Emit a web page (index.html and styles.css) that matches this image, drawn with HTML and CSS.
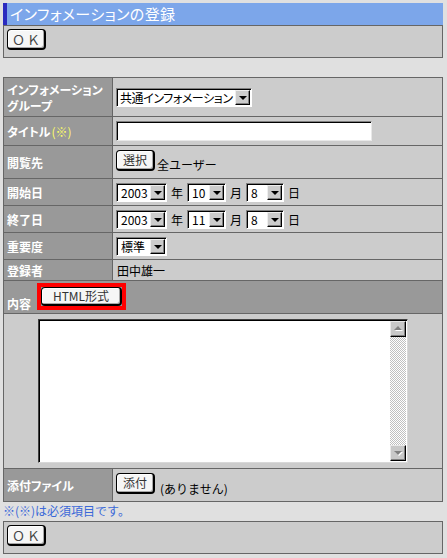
FILE: index.html
```html
<!DOCTYPE html>
<html lang="ja">
<head>
<meta charset="utf-8">
<title>インフォメーションの登録</title>
<link rel="stylesheet" href="styles.css">
</head>
<body>
<div class="page">
  <h1 class="title">インフォメーションの登録</h1>
  <div class="toolbar"><span class="btn btn-ok">ＯＫ</span></div>

  <div class="form">
    <div class="lab lab-2">インフォメーション<br>グループ</div>
    <div class="val">
      <span class="sel w-group"><span class="sel-text tight">共通インフォメーション</span><span class="sel-btn"></span></span>
    </div>

    <div class="lab">タイトル<span class="req">(※)</span></div>
    <div class="val"><span class="input"></span></div>

    <div class="lab">閲覧先</div>
    <div class="val">
      <span class="pair"><span class="btn btn-sm">選択</span><span class="after">全ユーザー</span></span>
    </div>

    <div class="lab">開始日</div>
    <div class="val date">
      <span class="sel w-year"><span class="sel-text">2003</span><span class="sel-btn"></span></span><span>年</span>
      <span class="sel w-month"><span class="sel-text">10</span><span class="sel-btn"></span></span><span>月</span>
      <span class="sel w-day"><span class="sel-text">8</span><span class="sel-btn"></span></span><span>日</span>
    </div>

    <div class="lab">終了日</div>
    <div class="val date">
      <span class="sel w-year"><span class="sel-text">2003</span><span class="sel-btn"></span></span><span>年</span>
      <span class="sel w-month"><span class="sel-text">11</span><span class="sel-btn"></span></span><span>月</span>
      <span class="sel w-day"><span class="sel-text">8</span><span class="sel-btn"></span></span><span>日</span>
    </div>

    <div class="lab">重要度</div>
    <div class="val">
      <span class="sel w-year"><span class="sel-text">標準</span><span class="sel-btn"></span></span>
    </div>

    <div class="lab">登録者</div>
    <div class="val"><span class="plain">田中雄一</span></div>

    <div class="content-head">
      <span class="ch-label">内容</span>
      <span class="hilite"><span class="btn btn-html">HTML形式</span></span>
    </div>

    <div class="content-body">
      <div class="textarea">
        <div class="ta-text"></div>
        <div class="scrollbar">
          <span class="sb-btn sb-up"></span>
          <span class="sb-track"></span>
          <span class="sb-btn sb-down"></span>
        </div>
      </div>
    </div>

    <div class="lab">添付ファイル</div>
    <div class="val">
      <span class="pair"><span class="btn btn-sm">添付</span><span class="after after-file">(ありません)</span></span>
    </div>
  </div>

  <p class="note">※(※)は必須項目です。</p>
  <div class="toolbar"><span class="btn btn-ok">ＯＫ</span></div>
</div>
</body>
</html>
```

FILE: styles.css
```css
html, body {
  margin: 0;
  padding: 0;
  background: #e0e0e0;
}

body {
  font-family: "Noto Sans CJK JP", "Liberation Sans", sans-serif;
  font-size: 12px;
  color: #000;
}

.page {
  width: 440px;
  padding: 3px 0 0 3px;
}

.title {
  margin: 0;
  height: 22px;
  box-sizing: border-box;
  background: #7ca6ea;
  border-left: 4px solid #2a2abf;
  padding-left: 3px;
  color: #fff;
  font-size: 15px;
  font-weight: normal;
  line-height: 22px;
  font-feature-settings: "palt";
  letter-spacing: 0.4px;
}

.toolbar {
  height: 33px;
  box-sizing: border-box;
  background: #cccccc;
  border: 1px solid #666;
  padding: 3px 0 0 3px;
}

/* buttons */
.btn {
  display: inline-flex;
  align-items: center;
  justify-content: center;
  box-sizing: border-box;
  background: #f6f6f6;
  border: 1px solid #000;
  border-right-width: 2px;
  border-bottom-width: 2px;
  border-radius: 4px;
  box-shadow: inset -1px -1px #a8a8a8, inset 1px 1px #fff;
  color: #333;
  font-size: 12px;
  line-height: 1;
}

.btn-ok {
  width: 39px;
  height: 21px;
  letter-spacing: 2px;
  padding-left: 2px;
  font-size: 13px;
  color: #444;
}

.btn-sm {
  width: 39px;
  height: 21px;
}

.btn-html {
  width: 81px;
  height: 19px;
}

/* form grid */
.form {
  margin-top: 19px;
  display: grid;
  grid-template-columns: 108px 1fr;
  grid-template-rows: 38px 28px 32px 26px 26px 26px 20px 32px 154px 32px;
  gap: 1px;
  background: #666;
  border: 1px solid #666;
}

.lab {
  background: #999999;
  color: #fff;
  font-weight: bold;
  padding-left: 3px;
  display: flex;
  align-items: center;
  line-height: 15px;
  white-space: nowrap;
  font-feature-settings: "palt";
}

.lab-2 {
  padding-top: 1px;
  line-height: 16px;
}

.req {
  color: #ffff66;
  font-weight: normal;
  margin-left: 1px;
}

.val {
  background: #cccccc;
  padding-left: 3px;
  display: flex;
  align-items: center;
}

.plain {
  padding-left: 1px;
  padding-top: 1px;
}

.date {
  gap: 4px;
}

/* fake select */
.sel {
  display: inline-flex;
  box-sizing: border-box;
  height: 19px;
  background: #fff;
  border: 1px solid;
  border-color: #808080 #fff #fff #808080;
  box-shadow: inset 1px 1px #000;
  padding: 1px;
}

.sel-text {
  flex: 1;
  padding-left: 3px;
  line-height: 15px;
  font-size: 12px;
  white-space: nowrap;
  overflow: hidden;
  font-feature-settings: "palt";
}

.tight {
  padding-left: 2px;
  letter-spacing: -0.4px;
}

.sel-btn {
  position: relative;
  flex: none;
  width: 15px;
  box-sizing: border-box;
  background: #cccccc;
  border: 1px solid;
  border-color: #eee #000 #000 #eee;
  box-shadow: inset -1px -1px #808080;
}

.sel-btn::after {
  content: "";
  position: absolute;
  left: 3px;
  top: 5px;
  border-left: 4px solid transparent;
  border-right: 4px solid transparent;
  border-top: 4px solid #000;
}

.w-group { width: 136px; }
.w-year { width: 51px; }
.w-month { width: 39px; }
.w-day { width: 38px; }

/* text input */
.input {
  display: block;
  width: 256px;
  height: 20px;
  box-sizing: border-box;
  background: #fff;
  border: 1px solid;
  border-color: #808080 #e8e8e8 #e8e8e8 #808080;
  box-shadow: inset 1px 1px #000;
}

.pair {
  display: inline-flex;
  align-items: flex-end;
  margin-top: -3px;
}

.after {
  margin-left: 2px;
  line-height: 14px;
  margin-bottom: -1px;
}

.after-file {
  margin-left: 5px;
  margin-bottom: -2px;
}

/* content header */
.content-head {
  grid-column: 1 / -1;
  background: #999999;
  display: flex;
  align-items: flex-end;
  padding: 0 0 3px 3px;
}

.ch-label {
  color: #fff;
  font-weight: bold;
  line-height: 14px;
  margin-bottom: -1px;
}

.hilite {
  display: inline-flex;
  margin-left: 6px;
  border: 4px solid #ff0000;
}

.content-body {
  grid-column: 1 / -1;
  background: #cccccc;
  display: flex;
  justify-content: center;
  padding-top: 5px;
}

.textarea {
  display: flex;
  width: 370px;
  height: 144px;
  box-sizing: border-box;
  background: #fff;
  border: 1px solid;
  border-color: #404040 #d8d8d8 #d8d8d8 #404040;
  box-shadow: inset 1px 1px #000;
  padding: 1px;
}

.ta-text {
  flex: 1;
}

.scrollbar {
  width: 16px;
  display: flex;
  flex-direction: column;
}

.sb-btn {
  position: relative;
  height: 16px;
  box-sizing: border-box;
  background: #c8c8c8;
  border: 1px solid;
  border-color: #e8e8e8 #000 #000 #e8e8e8;
  box-shadow: inset -1px -1px #808080;
}

.sb-up::after {
  content: "";
  position: absolute;
  left: 3px;
  top: 4px;
  border-left: 4px solid transparent;
  border-right: 4px solid transparent;
  border-bottom: 4px solid #808080;
  filter: drop-shadow(1px 1px 0 #fff);
}

.sb-down::after {
  content: "";
  position: absolute;
  left: 3px;
  top: 5px;
  border-left: 4px solid transparent;
  border-right: 4px solid transparent;
  border-top: 4px solid #808080;
  filter: drop-shadow(1px 1px 0 #fff);
}

.sb-track {
  flex: 1;
  background: repeating-conic-gradient(#c0c0c0 0 25%, #fff 0 50%) 0 0 / 2px 2px;
}

.note {
  margin: 0;
  height: 19px;
  line-height: 17px;
  color: #3a68d8;
  font-size: 12px;
}
```
